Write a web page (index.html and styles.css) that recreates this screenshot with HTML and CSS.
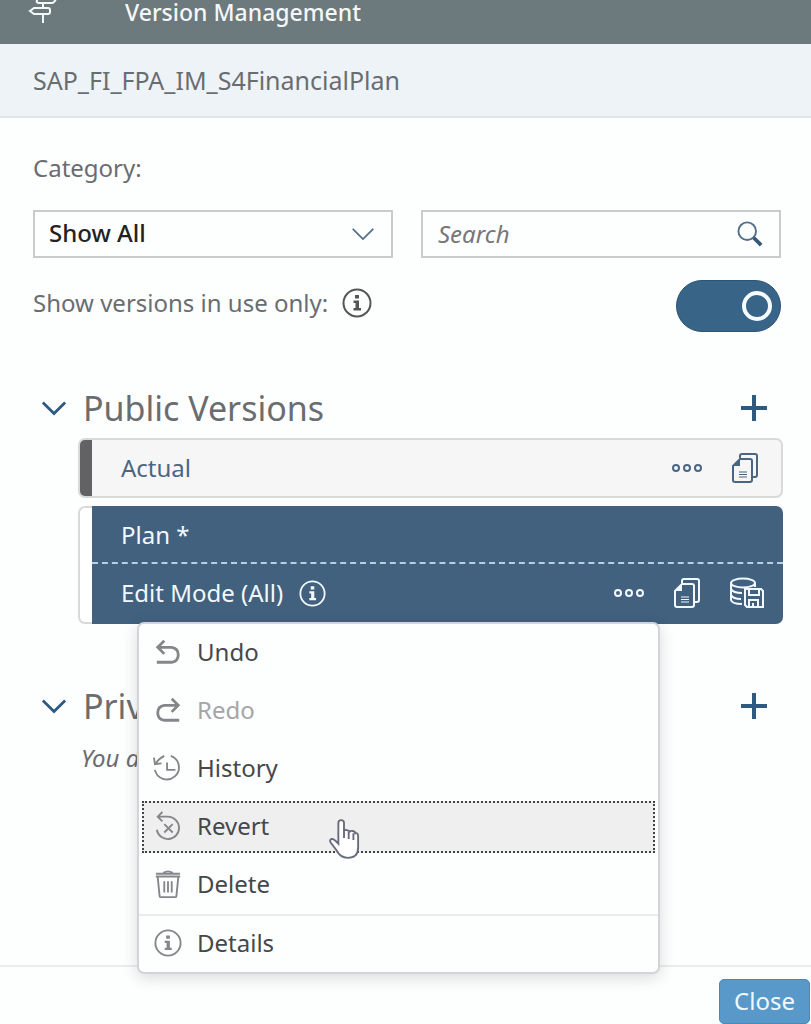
FILE: index.html
```html
<!DOCTYPE html>
<html lang="en">
<head>
<meta charset="utf-8">
<title>Version Management</title>
<link rel="stylesheet" href="styles.css">
</head>
<body>
<svg class="sprite" aria-hidden="true">
  <symbol id="chevron" viewBox="0 0 28 16"><path d="M2 2l12 12L26 2"/></symbol>
  <symbol id="plus" viewBox="0 0 26 26"><path d="M13 0v26M0 13h26"/></symbol>
  <symbol id="info" viewBox="0 0 30 30">
    <circle cx="15" cy="15" r="13.500"/>
    <path class="solid" d="M13 7h4v3.500h-4zM11.500 12.500H17V20h2v2.500h-7.500V20h2v-5h-2z"/>
  </symbol>
  <symbol id="more" viewBox="0 0 32 12"><circle cx="5" cy="6" r="3"/><circle cx="16" cy="6" r="3"/><circle cx="27" cy="6" r="3"/></symbol>
  <symbol id="copy" viewBox="0 0 28 32">
    <path d="M9 6V4q0-2 2-2h13q2 0 2 2v19q0 2-2 2h-2"/>
    <path d="M9 7h10q2 0 2 2v19q0 2-2 2H4q-2 0-2-2V14z"/>
    <path class="solid" d="M9 7v7H2z"/>
    <path class="thin" d="M8 20h8M8 22.500h8M8 25h8"/>
  </symbol>
  <symbol id="save" viewBox="0 0 36 32">
    <ellipse cx="14" cy="6" rx="12" ry="4.500"/>
    <path d="M2 6v17q1 4 11 4M26 6v4M2 12q2 4 11 4M2 18q2 4 10 4"/>
    <path d="M16 12h16l2 2v16H18l-2-2z"/>
    <path d="M20 12v6h10v-6M20 30v-7h9v7M24 26v4"/>
  </symbol>
</svg>

<header class="shell">
  <svg class="shell-icon" viewBox="0 0 32 24" aria-hidden="true"><path d="M16 3v5M16 14v9M11 -2q-3 5 1 5h13q2 0 4-4M7 8h14q2 0 2 2v2q0 2-2 2H7l-4-3z"/></svg>
  <h1 class="shell-title">Version Management</h1>
</header>
<div class="model">SAP_FI_FPA_IM_S4FinancialPlan</div>

<main class="content">
  <label class="label" for="category">Category:</label>
  <div class="filters">
    <div class="field">
      <select class="control" id="category"><option>Show All</option></select>
      <svg class="field-icon icon-chevron" aria-hidden="true"><use href="#chevron"/></svg>
    </div>
    <div class="field">
      <input class="control" type="search" placeholder="Search" aria-label="Search">
      <svg class="field-icon icon-search" viewBox="0 0 28 28" aria-hidden="true"><circle cx="11" cy="11" r="9.500"/><path class="handle" d="M18 18l8 8"/></svg>
    </div>
  </div>
  <div class="usage">
    <div class="usage-label">
      <label class="label" for="in-use">Show versions in use only:</label>
      <svg class="icon-info" aria-hidden="true"><use href="#info"/></svg>
    </div>
    <input class="switch" type="checkbox" role="switch" id="in-use" checked>
  </div>

  <section class="group">
    <div class="group-head">
      <button class="icon-button" aria-label="Collapse public versions"><svg class="icon-toggle"><use href="#chevron"/></svg></button>
      <h2 class="group-title">Public Versions</h2>
      <button class="icon-button" aria-label="Add public version"><svg class="icon-plus"><use href="#plus"/></svg></button>
    </div>
    <div class="cards">
      <article class="card card-actual">
        <div class="card-row">
          <span class="card-name">Actual</span>
          <button class="icon-button" aria-label="More"><svg class="icon-more"><use href="#more"/></svg></button>
          <button class="icon-button" aria-label="Copy"><svg class="icon-copy"><use href="#copy"/></svg></button>
        </div>
      </article>
      <article class="card card-plan">
        <div class="card-row card-summary"><span class="card-name">Plan *</span></div>
        <div class="card-row card-mode">
          <span class="card-name">Edit Mode (All) <svg class="icon-info icon-mode" aria-hidden="true"><use href="#info"/></svg></span>
          <button class="icon-button" aria-label="More"><svg class="icon-more"><use href="#more"/></svg></button>
          <button class="icon-button" aria-label="Copy"><svg class="icon-copy"><use href="#copy"/></svg></button>
          <button class="icon-button" aria-label="Save"><svg class="icon-save"><use href="#save"/></svg></button>
        </div>
        <div class="menu" role="menu">
          <button class="menu-item" role="menuitem">
            <svg class="menu-icon bold" viewBox="0 0 30 30"><path d="M11 3L4 10l7 7M4 10h15q7 1 7 8t-7 8H3"/></svg>Undo</button>
          <button class="menu-item" role="menuitem" disabled>
            <svg class="menu-icon bold" viewBox="0 0 30 30"><path d="M19 3l7 7-7 7M26 10H11q-7 1-7 8t7 8h16"/></svg>Redo</button>
          <button class="menu-item" role="menuitem">
            <svg class="menu-icon" viewBox="0 0 30 30"><path d="M11 2Q5 5 2 10M0 4l1 7 7-1M18 2a13 13 0 1 1-17 15M14 9v8h9"/></svg>History</button>
          <button class="menu-item focused" role="menuitem">
            <svg class="menu-icon" viewBox="0 0 30 30"><path d="M9 0L4 5l5 5M4 5h11a12 12 0 1 1-12 14M11 13l9 9M20 13l-9 9"/></svg>Revert
            <svg class="pointer" viewBox="0 0 34 44" aria-hidden="true"><path d="M11 27V5q0-3 3-3t3 3v9q0-2 3-1.500t3 2.500q0-2 3-1.500t3 2.500q3-1 3 3v12q0 11-11 11-8 0-12-8l-6-8q-2-3 1-4 2-.500 7 5z"/><path d="M17 12v9M22 14v8M27 16v7"/></svg>
          </button>
          <button class="menu-item" role="menuitem">
            <svg class="menu-icon" viewBox="0 0 30 30"><path d="M2 4h26M2 7h26M10 3q5-3 10 0M4 8l2 20q0 1 2 1h14q2 0 2-1l2-20M11 12v12M15 12v12M19 12v12"/></svg>Delete</button>
          <button class="menu-item last" role="menuitem">
            <svg class="menu-icon"><use href="#info"/></svg>Details</button>
        </div>
      </article>
    </div>
  </section>

  <section class="group group-private">
    <div class="group-head">
      <button class="icon-button" aria-label="Collapse private versions"><svg class="icon-toggle"><use href="#chevron"/></svg></button>
      <h2 class="group-title">Private Versions</h2>
      <button class="icon-button" aria-label="Add private version"><svg class="icon-plus"><use href="#plus"/></svg></button>
    </div>
    <p class="empty">You do not have any private versions.</p>
  </section>
</main>

<footer class="footer"><button class="close">Close</button></footer>
</body>
</html>
```
FILE: styles.css
```css
* { box-sizing: border-box; }

body {
  margin: 0;
  min-height: 100vh;
  display: flex;
  flex-direction: column;
  background: #fdfefe;
  color: #6a6d70;
  font: 24px/32px "Noto Sans", "Open Sans", sans-serif;
}

button, input, select { font: inherit; color: inherit; }

button {
  padding: 0;
  border: 0;
  background: none;
  cursor: pointer;
}

svg {
  flex: none;
  fill: none;
  stroke: currentColor;
  stroke-width: 2;
  overflow: visible;
}

.sprite { position: absolute; width: 0; height: 0; }
.solid { fill: currentColor; stroke: none; }
.thin { stroke-width: 1; }

.shell {
  display: flex;
  height: 44px;
  gap: 66px;
  padding-left: 27px;
  overflow: hidden;
  background: #6c797d;
  color: #f4f7f8;
}
.shell-icon { width: 32px; height: 24px; }
.shell-title { margin: 0; font-size: 23px; font-weight: 500; line-height: 24px; }

.model {
  padding: 20px 33px;
  border-bottom: 2px solid #dfe5ea;
  background: #eef3f8;
  font-size: 25px;
}

.content { flex: 1; padding: 34px 30px 0 33px; }
.label { display: block; }

.filters {
  display: grid;
  grid-template-columns: 1fr 1fr;
  gap: 28px;
  margin-top: 26px;
}
.field { display: grid; align-items: center; }
.field > * { grid-area: 1 / 1; }
.control {
  width: 100%;
  height: 48px;
  padding: 0 15px 2px;
  border: 2px solid #c9cbcc;
  border-radius: 0;
  background: transparent;
  appearance: none;
  outline: 0;
}
select.control { padding-left: 14px; color: #222; font-weight: 500; }
.control::placeholder { color: #777; font-style: italic; opacity: 1; }
.field-icon { justify-self: end; margin-right: 18px; pointer-events: none; color: #526d86; }
.icon-chevron { width: 24px; height: 14px; }
.icon-search { width: 26px; height: 26px; }
.handle { stroke: #34597a; stroke-width: 4; }

.usage { display: flex; justify-content: space-between; margin-top: 22px; }
.usage-label { display: flex; align-items: center; gap: 14px; height: 46px; }
.icon-info { width: 30px; height: 30px; color: #555; }
.switch {
  display: flex;
  align-items: center;
  justify-content: flex-end;
  width: 105px;
  height: 52px;
  margin: 0;
  padding-right: 8px;
  border: 1px solid #2b5475;
  border-radius: 26px;
  background: #376487;
  appearance: none;
}
.switch::before {
  content: "";
  box-sizing: border-box;
  width: 30px;
  height: 30px;
  border: 4px solid #f5fbff;
  border-radius: 50%;
}

.group { margin-top: 54px; }
.group-private { margin-top: 60px; }
.group-head {
  display: flex;
  align-items: center;
  gap: 16px;
  height: 44px;
  padding: 0 14px 0 8px;
}
.group-title { flex: 1; margin: 0; font-size: 34px; font-weight: 400; line-height: 44px; }
.icon-button { display: flex; align-items: center; color: #2f5a80; }
.icon-toggle { width: 26px; height: 16px; stroke-width: 3; }
.icon-plus { width: 26px; height: 26px; stroke-width: 4; }

.cards { display: grid; gap: 8px; margin: 8px -2px 0 45px; }
.card {
  position: relative;
  border: 2px solid transparent;
  border-radius: 7px;
  background:
    linear-gradient(to right, var(--edge) 12px, var(--fill) 12px) padding-box,
    linear-gradient(to right, #d9d9d9 14px, var(--rim) 14px) border-box;
}
.card-actual { --edge: #626264; --fill: #f6f6f6; --rim: #d9d9d9; color: #4a6682; }
.card-plan { --edge: #fff; --fill: #41617f; --rim: #41617f; color: #f2f8fd; }
.card-row {
  display: flex;
  align-items: center;
  gap: 28px;
  height: 56px;
  margin-left: 12px;
  padding: 0 22px 0 29px;
}
.card-mode { height: 58px; padding-right: 16px; }
.card-summary { margin-right: -2px; border-bottom: 2px dashed #b9cede; }
.card-name { display: flex; align-items: center; gap: 16px; flex: 1; }
.card .icon-button { color: inherit; }
.icon-more { width: 32px; height: 12px; }
.icon-copy { width: 28px; height: 32px; }
.icon-save { width: 36px; height: 32px; }
.icon-mode { width: 27px; height: 27px; color: inherit; }

.menu {
  position: absolute;
  z-index: 1;
  top: 100%;
  left: 57px;
  right: 121px;
  padding: 0 3px;
  border: 2px solid #d3d3d8;
  border-radius: 7px;
  background: #fdfefe;
  box-shadow: 0 4px 16px rgba(0, 0, 0, .14);
}
.menu-item {
  position: relative;
  display: flex;
  align-items: center;
  gap: 15px;
  width: 100%;
  height: 58px;
  padding: 0 0 2px 12px;
  color: #45484b;
}
.menu-item:disabled { color: #a5a5a8; }
.menu-icon { width: 28px; height: 28px; color: #85868a; }
.bold { stroke-width: 3; }
.focused { height: 52px; margin: 3px 0; padding-left: 10px; border: 2px dotted #444; background: #efefef; }
.last { margin: 0 -3px; width: calc(100% + 6px); padding-left: 15px; border-top: 2px solid #ebebed; }
.pointer {
  position: absolute;
  left: 184px;
  top: 15px;
  width: 32px;
  height: 42px;
  fill: #fff;
  stroke: #686c7c;
}

.empty { margin: 14px 0 0 48px; font-style: italic; }

.footer {
  display: flex;
  justify-content: flex-end;
  height: 59px;
  padding: 12px 1px 0;
  border-top: 2px solid #ececee;
}
.close {
  height: 45px;
  padding: 0 14px 2px;
  border: 1px solid #4789bb;
  border-radius: 5px;
  background: #5899ca;
  color: #f0f8ff;
}
```
